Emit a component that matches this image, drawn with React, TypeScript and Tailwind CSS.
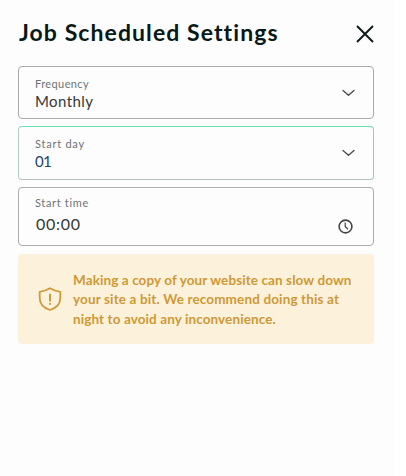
import React from "react";

function Chevron() {
  return (
    <svg className="mr-[18px] h-2 w-[13px] shrink-0" viewBox="0 0 13 8" fill="none" stroke="#474949" strokeWidth="1.3" strokeLinecap="round" strokeLinejoin="round">
      <path d="M1 1.4 6.5 6.2 12 1.4" />
    </svg>
  );
}

export default function App() {
  return (
    <div className="h-[476px] w-[406px] bg-white font-['Lato',sans-serif]">
      <main className="flex h-full w-[395px] flex-col bg-[#fdfdfd] pl-[18px] pr-[21px]">
        <header className="flex h-[66px] items-start justify-between">
          <h2 className="ml-px mt-4 whitespace-nowrap text-[23px] font-bold leading-8 tracking-[1.08px] text-[#071918]">Job Scheduled Settings</h2>
          <button aria-label="Close" className="mt-[25px]">
            <svg className="h-[18px] w-[18px]" viewBox="0 0 18 18" fill="none" stroke="#101b1b" strokeWidth="2">
              <path d="m1 1 16 16M17 1 1 17" />
            </svg>
          </button>
        </header>

        <div className="flex flex-col">
          <div className="flex h-[53px] items-center justify-between rounded border border-[#aaa] pl-4">
            <div className="flex flex-col whitespace-nowrap pt-[3px]">
              <span className="text-[11px] leading-[14px] tracking-[0.4px] text-[#707373]">Frequency</span>
              <span className="text-[15px] leading-5 tracking-[0.4px] text-[#333838]">Monthly</span>
            </div>
            <Chevron />
          </div>

          <div className="mt-[7px] flex h-[54px] items-center justify-between rounded border border-t-[#70e0b2] border-r-[#70e0b2] border-b-[#b5c2bc] border-l-[#b3cec2] pl-4">
            <div className="flex flex-col whitespace-nowrap pt-px">
              <span className="text-[11px] leading-[14px] tracking-[0.75px] text-[#707373]">Start day</span>
              <span className="text-[15px] leading-5 tracking-[-0.8px] text-[#23446c]">01</span>
            </div>
            <Chevron />
          </div>

          <div className="mt-[7px] flex h-[59px] justify-between rounded border border-[#aeaeae] pl-4">
            <div className="flex flex-col whitespace-nowrap pt-2">
              <span className="text-[11px] leading-[14px] tracking-[0.65px] text-[#707373]">Start time</span>
              <span className="ml-px mt-1 text-[16px] leading-5 tracking-[0.7px] text-[#333838]">00:00</span>
            </div>
            <svg className="mr-5 mt-[31px] h-[15px] w-[15px]" viewBox="0 0 15 15" fill="none" stroke="#414545" strokeWidth="1.6">
              <circle cx="7.5" cy="7.5" r="6.4" />
              <path d="M7.2 3.5v4l2.8 2.7" strokeWidth="1.2" />
            </svg>
          </div>

          <aside className="mt-2 flex h-[90px] items-center rounded bg-[#fcf2dc] pl-5 text-[#cf9935]">
            <svg className="h-6 w-6 shrink-0" viewBox="0 0 24 24" fill="none" stroke="currentColor" strokeWidth="1.8" strokeLinejoin="round" strokeLinecap="round">
              <path d="M12 1.2C9 3 5.5 4.3 1.7 4.8v6.3C1.7 17 5.5 21 12 23c6.5-2 10.3-6 10.3-11.9V4.8C18.5 4.3 15 3 12 1.2Z" />
              <path d="M12 7.5v6.2M12 16.8v.1" strokeWidth="2" />
            </svg>
            <p className="ml-[11px] flex flex-col whitespace-nowrap pt-[2px] text-[13.5px] font-bold leading-[19.5px]">
              <span className="tracking-[0.1px]">Making a copy of your website can slow down</span>
              <span className="tracking-[0.14px]">your site a bit. We recommend doing this at</span>
              <span className="tracking-[0.1px]">night to avoid any inconvenience.</span>
            </p>
          </aside>
        </div>
      </main>
    </div>
  );
}
